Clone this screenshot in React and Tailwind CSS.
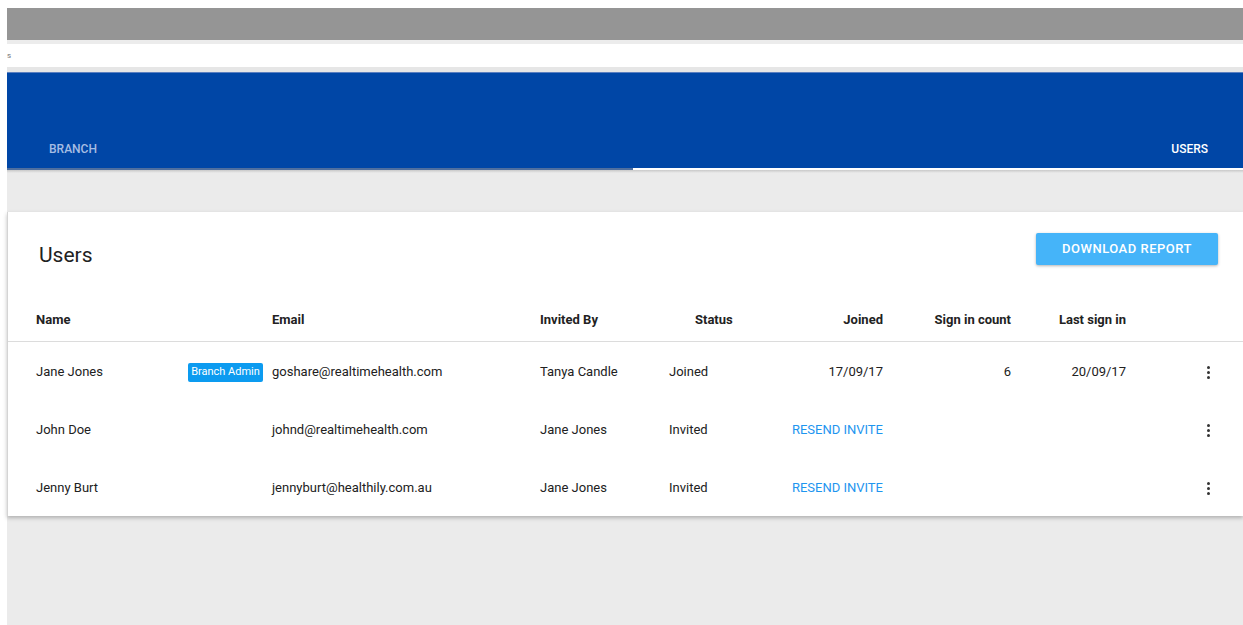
import React from "react";

const COLUMNS = [
  { key: "name", label: "Name", width: "w-[236px]", head: "pl-0", align: "text-left" },
  { key: "email", label: "Email", width: "w-[268px]", head: "pl-0", align: "text-left" },
  { key: "invitedBy", label: "Invited By", width: "w-[129px]", head: "pl-0", align: "text-left" },
  { key: "status", label: "Status", width: "w-[91px]", head: "pl-[26px]", align: "text-left" },
  { key: "joined", label: "Joined", width: "w-[123px]", head: "pl-0", align: "text-right" },
  { key: "signInCount", label: "Sign in count", width: "w-[128px]", head: "pl-0", align: "text-right" },
  { key: "lastSignIn", label: "Last sign in", width: "w-[115px]", head: "pl-0", align: "text-right" },
];

const USERS = [
  {
    name: "Jane Jones",
    role: "Branch Admin",
    email: "goshare@realtimehealth.com",
    invitedBy: "Tanya Candle",
    status: "Joined",
    joined: "17/09/17",
    signInCount: "6",
    lastSignIn: "20/09/17",
  },
  {
    name: "John Doe",
    email: "johnd@realtimehealth.com",
    invitedBy: "Jane Jones",
    status: "Invited",
  },
  {
    name: "Jenny Burt",
    email: "jennyburt@healthily.com.au",
    invitedBy: "Jane Jones",
    status: "Invited",
  },
];

function MoreButton() {
  return (
    <button className="flex h-[24px] w-[24px] flex-col items-center justify-center gap-[2px]">
      <span className="h-[3px] w-[3px] rounded-full bg-[#333]" />
      <span className="h-[3px] w-[3px] rounded-full bg-[#333]" />
      <span className="h-[3px] w-[3px] rounded-full bg-[#333]" />
    </button>
  );
}

function UserRow({ user }) {
  return (
    <div className="flex h-[58px] items-center pt-[2px] pl-[28px] text-[13px] text-[#212121]">
      <div className="flex w-[236px] items-center">
        <span className="w-[152px]">{user.name}</span>
        {user.role && (
          <span className="flex h-[19px] w-[75px] items-center justify-center rounded-[2px] bg-[#0c9bf0] text-[11px] text-white">
            {user.role}
          </span>
        )}
      </div>
      <div className="w-[268px]">{user.email}</div>
      <div className="w-[129px]">{user.invitedBy}</div>
      <div className="w-[91px]">{user.status}</div>
      <div className="w-[123px] text-right">
        {user.joined ? (
          user.joined
        ) : (
          <button className="text-[13px] uppercase text-[#1e95ef]">Resend invite</button>
        )}
      </div>
      <div className="w-[128px] text-right">{user.signInCount}</div>
      <div className="w-[115px] text-right">{user.lastSignIn}</div>
      <div className="flex flex-1 justify-end pr-[23px]">
        <MoreButton />
      </div>
    </div>
  );
}

export default function App() {
  return (
    <div
      className="flex h-[625px] w-full flex-col overflow-hidden bg-white pt-[8px] pl-[7px]"
      style={{ fontFamily: "Roboto, 'Liberation Sans', sans-serif" }}
    >
      {/* browser chrome strips */}
      <div className="h-[32px] shrink-0 bg-[#959595]" />
      <div className="h-[4px] shrink-0 bg-[#ececec]" />
      <div className="flex h-[23px] shrink-0 items-center bg-white">
        <span className="text-[8px] leading-none text-[#777]">s</span>
      </div>
      <div className="h-[5px] shrink-0 bg-[#e6e6e6]" />

      {/* tab bar */}
      <div className="flex h-[98px] shrink-0 items-end border-t border-[#5a7fc0] bg-[#0046a6]">
        <div className="flex h-[40px] w-[626px] items-center border-b-2 border-[#4f6f9f] pl-[42px] text-[12px] font-medium uppercase text-[#a6bde3]">
          Branch
        </div>
        <div className="flex h-[40px] flex-1 items-center justify-end border-b-2 border-white pr-[35px] text-[12px] font-medium uppercase text-white">
          Users
        </div>
      </div>

      <div className="flex flex-1 flex-col bg-[#ebebeb]">
        <div className="h-[3px] bg-gradient-to-b from-[#c9c9c9] to-[#ebebeb]" />
        <div className="h-[39px]" />

        {/* users card */}
        <div className="border-l border-[#d4d4d4] bg-white shadow-[0_2px_4px_rgba(0,0,0,0.25)]">
          <div className="flex h-[84px] items-start justify-between pt-[21px] pr-[25px] pl-[31px]">
            <h1 className="mt-[8px] text-[21px] leading-[28px] font-normal text-[#212121]">Users</h1>
            <button className="h-[32px] w-[182px] rounded-[2px] bg-[#45b4f9] text-[13px] font-medium tracking-[0.5px] text-white uppercase shadow-[0_1px_3px_rgba(0,0,0,0.3)]">
              Download report
            </button>
          </div>

          <div className="flex h-[46px] items-center border-b border-[#dcdcdc] pt-[2px] pl-[28px] text-[13px] font-bold text-[#222]">
            {COLUMNS.map((col) => (
              <div key={col.key} className={`${col.width} ${col.head} ${col.align}`}>
                {col.label}
              </div>
            ))}
          </div>

          {USERS.map((user) => (
            <UserRow key={user.email} user={user} />
          ))}
        </div>
      </div>
    </div>
  );
}
